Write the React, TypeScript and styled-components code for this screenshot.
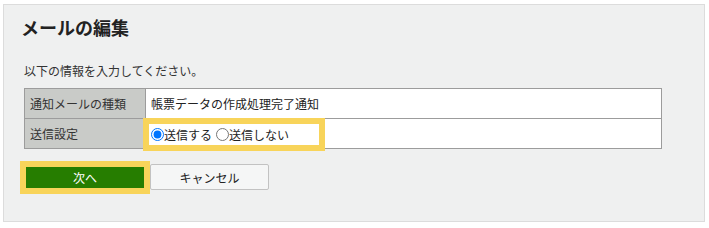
import React from "react";
import styled, { createGlobalStyle } from "styled-components";

const Global = createGlobalStyle`
  html, body { margin: 0; padding: 0; background: #ffffff; }
  body { font-family: "Noto Sans CJK JP", "Noto Sans", sans-serif; color: #222; }
  * { box-sizing: border-box; }
`;

const Page = styled.div`
  padding: 4px 3px;
`;

const Panel = styled.section`
  width: 702px;
  height: 218px;
  background: #eff0f0;
  border: 1px solid #dcdcdc;
  padding: 9px 20px 0 20px;
`;

const Title = styled.h2`
  margin: 0 0 0 -3px;
  font-size: 18px;
  line-height: 26px;
  font-weight: 700;
  color: #222;
`;

const Lead = styled.p`
  margin: 23px 0 0 0;
  font-size: 12px;
  line-height: 16px;
  color: #333;
`;

const FormTable = styled.div`
  margin-top: 9px;
  width: 638px;
  display: grid;
  grid-template-columns: 120px 1fr;
  border: 1px solid #9c9c9c;
`;

const LabelCell = styled.div<{ $first?: boolean }>`
  height: ${(p) => (p.$first ? 29 : 30)}px;
  background: #c9cbc8;
  padding: 0 5px;
  display: flex;
  align-items: center;
  font-size: 12px;
  color: #333;
  border-top: ${(p) => (p.$first ? "none" : "1px solid #9c9c9c")};
`;

const ValueCell = styled.div<{ $first?: boolean }>`
  height: ${(p) => (p.$first ? 29 : 30)}px;
  background: #ffffff;
  border-left: 1px solid #9c9c9c;
  border-top: ${(p) => (p.$first ? "none" : "1px solid #9c9c9c")};
  padding: 0 5px;
  display: flex;
  align-items: center;
  font-size: 12px;
  color: #222;
`;

const Highlight = styled.span`
  display: inline-flex;
  align-items: center;
  width: 170px;
  height: 21px;
  margin: 2px 0 0 -2px;
  padding-left: 2px;
  background: #fff;
  outline: 6px solid #f8d45a;
`;

const RadioLabel = styled.label<{ $gap?: boolean }>`
  display: inline-flex;
  align-items: center;
  font-size: 12px;
  color: #222;
  margin-left: ${(p) => (p.$gap ? "4px" : "0")};
`;

const Radio = styled.input`
  margin: 0;
  width: 13px;
  height: 13px;
  accent-color: #0075ff;
`;

const Actions = styled.div`
  margin-top: 15px;
  display: flex;
  align-items: center;
`;

const PrimaryButton = styled.button`
  margin: 0 6px 0 2px;
  width: 118px;
  height: 21px;
  border: none;
  background: #267d00;
  color: #fff;
  font-family: inherit;
  font-size: 12px;
  padding: 0;
  outline: 6px solid #f8d45a;
`;

const SecondaryButton = styled.button`
  width: 119px;
  height: 26px;
  border: 1px solid #c2c2c2;
  border-radius: 2px;
  background: #f5f6f6;
  color: #222;
  font-family: inherit;
  font-size: 12px;
  padding: 0;
`;

export default function App() {
  return (
    <>
      <Global />
      <Page>
        <Panel>
          <Title>メールの編集</Title>
          <Lead>以下の情報を入力してください。</Lead>
          <FormTable>
            <LabelCell $first>通知メールの種類</LabelCell>
            <ValueCell $first>帳票データの作成処理完了通知</ValueCell>
            <LabelCell>送信設定</LabelCell>
            <ValueCell>
              <Highlight>
                <RadioLabel>
                  <Radio type="radio" name="send" defaultChecked />
                  送信する
                </RadioLabel>
                <RadioLabel $gap>
                  <Radio type="radio" name="send" />
                  送信しない
                </RadioLabel>
              </Highlight>
            </ValueCell>
          </FormTable>
          <Actions>
            <PrimaryButton type="button">次へ</PrimaryButton>
            <SecondaryButton type="button">キャンセル</SecondaryButton>
          </Actions>
        </Panel>
      </Page>
    </>
  );
}
